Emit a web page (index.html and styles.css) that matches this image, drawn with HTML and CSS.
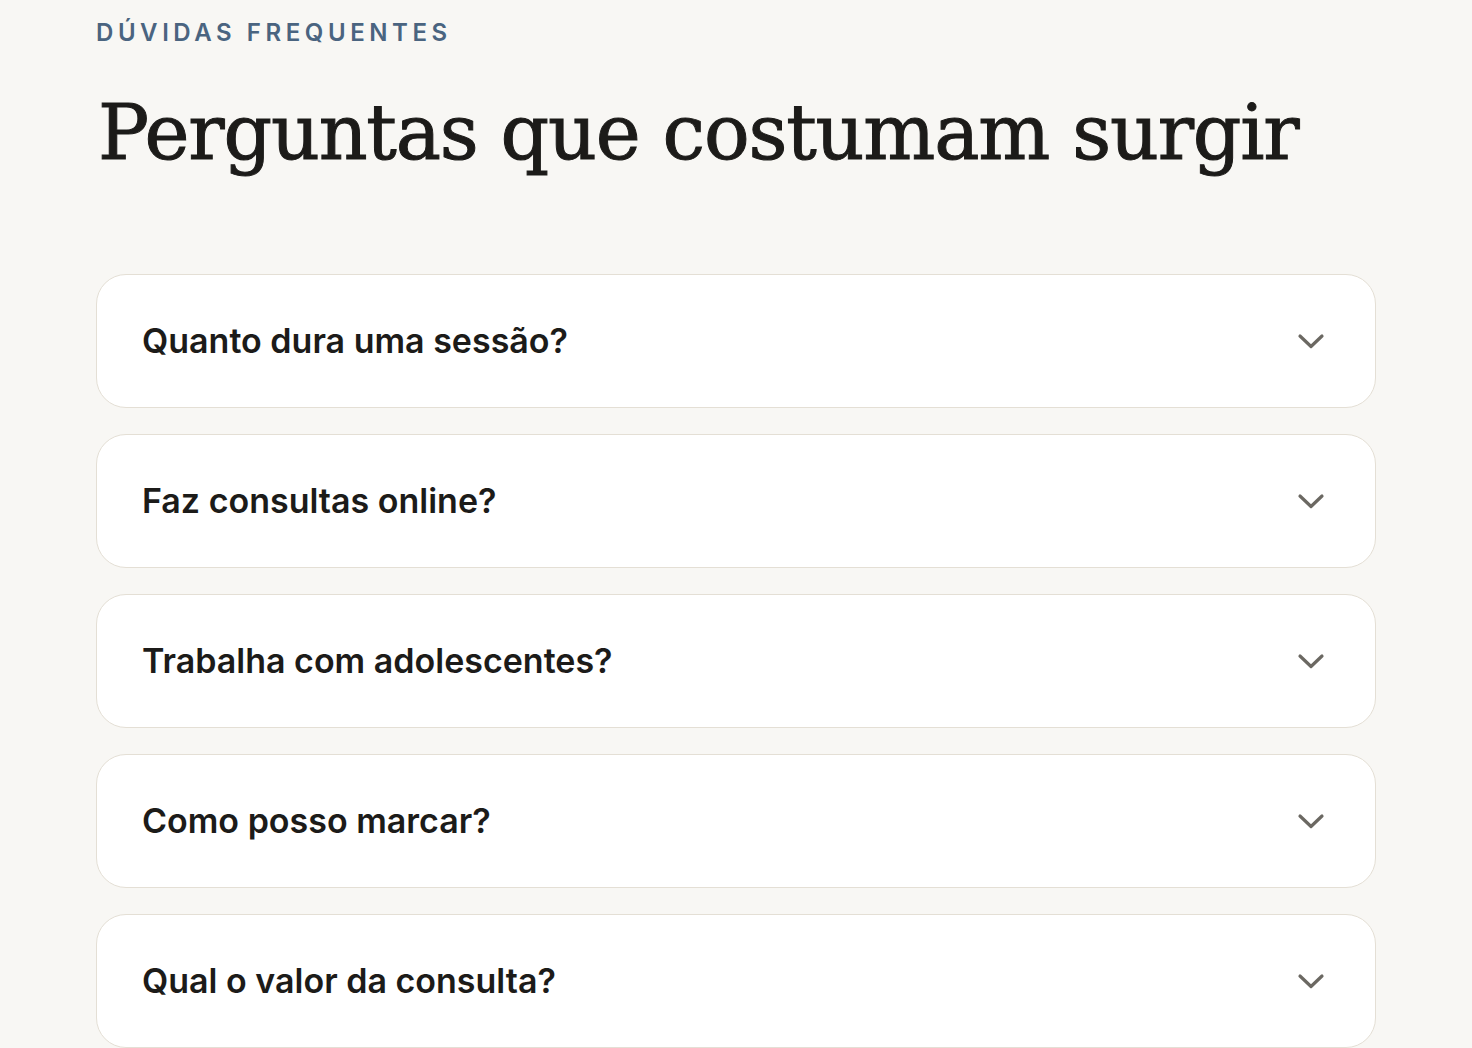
FILE: index.html
```html
<!DOCTYPE html>
<html lang="pt">
<head>
    <meta charset="UTF-8">
    <meta name="viewport" content="width=device-width, initial-scale=1.0">
    <title>Dúvidas frequentes</title>
    <link rel="stylesheet" href="styles.css">
</head>
<body>
    <section class="faq">
        <p class="eyebrow">Dúvidas frequentes</p>
        <h2 class="faq-title">Perguntas que costumam surgir</h2>

        <!-- FAQ list -->
        <div class="faq-list">
            <button class="faq-item" type="button">
                <span class="faq-question">Quanto dura uma sessão?</span>
                <svg class="chevron" width="28" height="28" viewBox="0 0 28 28" aria-hidden="true"><path d="M3 9 14 19.5 25 9"/></svg>
            </button>
            <button class="faq-item" type="button">
                <span class="faq-question">Faz consultas online?</span>
                <svg class="chevron" width="28" height="28" viewBox="0 0 28 28" aria-hidden="true"><path d="M3 9 14 19.5 25 9"/></svg>
            </button>
            <button class="faq-item" type="button">
                <span class="faq-question">Trabalha com adolescentes?</span>
                <svg class="chevron" width="28" height="28" viewBox="0 0 28 28" aria-hidden="true"><path d="M3 9 14 19.5 25 9"/></svg>
            </button>
            <button class="faq-item" type="button">
                <span class="faq-question">Como posso marcar?</span>
                <svg class="chevron" width="28" height="28" viewBox="0 0 28 28" aria-hidden="true"><path d="M3 9 14 19.5 25 9"/></svg>
            </button>
            <button class="faq-item" type="button">
                <span class="faq-question">Qual o valor da consulta?</span>
                <svg class="chevron" width="28" height="28" viewBox="0 0 28 28" aria-hidden="true"><path d="M3 9 14 19.5 25 9"/></svg>
            </button>
        </div>
    </section>
</body>
</html>
```

FILE: styles.css
```css
body {
    margin: 0;
    padding: 0;
    background-color: #f8f7f4;
    color: #1c1b19;
    font-family: Inter, "Noto Sans", sans-serif;
}
.faq {
    max-width: 1280px;
    margin: 0 auto;
    padding-top: 18px;
}
.eyebrow {
    margin: 0;
    font-size: 24px;
    line-height: 30px;
    font-weight: 600;
    letter-spacing: 0.19em;
    text-transform: uppercase;
    color: #4a6480;
}
.faq-title {
    margin: 43px 0 0 2px;
    font-family: "DejaVu Serif", "Liberation Serif", serif;
    font-size: 76px;
    line-height: 1.1;
    font-weight: 400;
    letter-spacing: -1.2px;
    -webkit-text-stroke: 1px #1c1b19;
    color: #1c1b19;
}
.faq-list {
    display: flex;
    flex-direction: column;
    gap: 26px;
    margin-top: 99px;
}
.faq-item {
    display: flex;
    align-items: center;
    justify-content: space-between;
    width: 100%;
    height: 134px;
    padding: 0 50px 0 45px;
    background-color: #fff;
    border: 1.5px solid #e4dfd5;
    border-radius: 30px;
    font-family: inherit;
    color: inherit;
    text-align: left;
    cursor: pointer;
}
.faq-question {
    font-size: 34px;
    font-weight: 600;
}
.chevron {
    flex: none;
    fill: none;
    stroke: #6b6862;
    stroke-width: 3.2;
    stroke-linecap: round;
    stroke-linejoin: round;
}
```
